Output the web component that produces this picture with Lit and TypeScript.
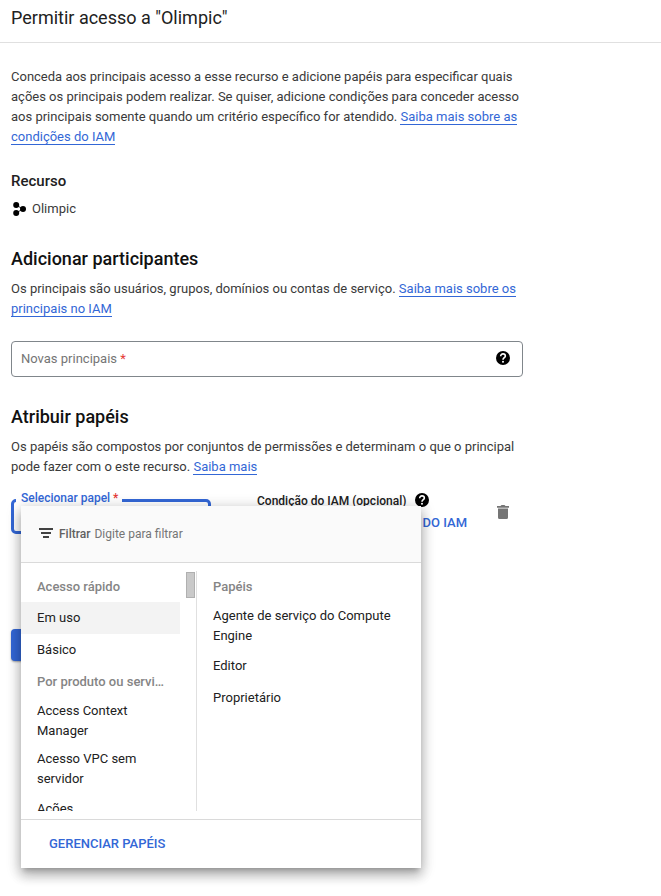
import { LitElement, html, css } from "lit";
import { customElement, property } from "lit/decorators.js";

@customElement("help-icon")
class HelpIcon extends LitElement {
  static styles = css`
    :host { display: block; width: 14px; height: 14px; }
    svg { display: block; }
  `;
  render() {
    return html`<svg width="14" height="14" viewBox="0 0 14 14">
      <circle cx="7" cy="7" r="7"/>
      <path d="M4.700 5.300C4.700 3.700 5.700 2.900 7 2.900s2.350.85 2.350 2.100C9.350 6.600 7 6.800 7 8.800" fill="none" stroke="#fff" stroke-width="1.600"/>
      <rect x="6.100" y="9.900" width="1.800" height="1.700" fill="#fff"/>
    </svg>`;
  }
}

type Entry = { text: string; kind?: "head" | "active" | "two" | "cut" };

@customElement("role-list")
class RoleList extends LitElement {
  @property({ attribute: false }) entries: Entry[] = [];
  static styles = css`
    :host { display: block; }
    .item { box-sizing: border-box; height: 32px; padding: 6px 16px; line-height: 20px; color: #212121; white-space: pre-line; }
    .head { height: 31px; color: #858585; font-weight: 500; white-space: nowrap; }
    .active { background: #f3f3f3; }
    .two { height: 48px; padding-top: 4px; padding-bottom: 4px; }
    .cut { padding-top: 6px; }
  `;
  render() {
    return this.entries.map((e) => html`<div class="item ${e.kind ?? ""}">${e.text}</div>`);
  }
}

@customElement("role-menu")
class RoleMenu extends LitElement {
  static styles = css`
    :host { display: flex; flex-direction: column; box-sizing: border-box; width: 400px; height: 362px; background: #fff;
      box-shadow: 0 5px 5px -3px rgba(0,0,0,.2), 0 8px 10px 1px rgba(0,0,0,.14), 0 3px 14px 2px rgba(0,0,0,.12), 0 4px 14px rgba(0,0,0,.12); }
    .filter { box-sizing: border-box; height: 57px; display: flex; align-items: center; padding: 0 18px; background: #fafafa; border-bottom: 1px solid #dadada; font-size: 12px; color: #757575; }
    .filter svg { display: block; margin: -2px 6px 0 0; }
    .filter b { font-weight: 500; color: #616161; margin-right: 4px; }
    .cols { display: flex; height: 248px; overflow: hidden; }
    .left { position: relative; width: 175px; height: 240px; margin-top: 8px; overflow: hidden; border-right: 1px solid #e0e0e0; }
    .left role-list { width: 159px; }
    .thumb { position: absolute; right: 1px; top: 1px; box-sizing: border-box; width: 9px; height: 26px; background: #c9c9c9; border: 1px solid #b0b0b0; }
    .right { width: 224px; padding-top: 8px; }
    .foot { flex: 1; border-top: 1px solid #dadada; margin-top: 8px; display: flex; align-items: center; padding-left: 28px; color: #3367d6; font-weight: 500; }
  `;
  private quick: Entry[] = [
    { text: "Acesso rápido", kind: "head" },
    { text: "Em uso", kind: "active" },
    { text: "Básico" },
    { text: "Por produto ou servi…", kind: "head" },
    { text: "Access Context\nManager", kind: "two" },
    { text: "Acesso VPC sem\nservidor", kind: "two" },
    { text: "Ações", kind: "cut" },
  ];
  private roles: Entry[] = [
    { text: "Papéis", kind: "head" },
    { text: "Agente de serviço do Compute\nEngine", kind: "two" },
    { text: "Editor" },
    { text: "Proprietário" },
  ];
  render() {
    return html`
      <div class="filter">
        <svg width="14" height="10" viewBox="0 0 14 10" fill="#424242"><path d="M0 0h14v2H0zM2 4h10v2H2zM4 8h6v2H4z"/></svg>
        <b>Filtrar</b><span>Digite para filtrar</span>
      </div>
      <div class="cols">
        <div class="left"><role-list .entries=${this.quick}></role-list><div class="thumb"></div></div>
        <div class="right"><role-list .entries=${this.roles}></role-list></div>
      </div>
      <div class="foot">GERENCIAR PAPÉIS</div>`;
  }
}

@customElement("app-root")
class AppRoot extends LitElement {
  static styles = css`
    :host { display: block; width: 661px; height: 896px; overflow: hidden; background: #fff; font: 400 13px/20px Roboto, sans-serif; color: #3a3a3a; }
    .title { box-sizing: border-box; height: 43px; padding: 6px 11px 0; border-bottom: 1px solid #e0e0e0; font-size: 18px; line-height: 24px; color: #212121; }
    .body { padding: 24px 11px 0; width: 512px; }
    p { margin: 0; white-space: nowrap; }
    .link { color: #3367d6; border-bottom: 1px solid #3367d6; }
    h3 { margin: 24px 0 0; font-size: 15px; line-height: 20px; font-weight: 500; color: #212121; }
    h2 { margin: 28px 0 0; font-size: 18px; line-height: 24px; font-weight: 500; color: #111; }
    h2 + p { margin-top: 8px; }
    .resource { display: flex; align-items: center; margin-top: 8px; }
    .resource svg { display: block; margin: 0 6px 0 2px; }
    .input { box-sizing: border-box; height: 36px; margin-top: 22px; display: flex; align-items: center; justify-content: space-between; padding: 0 12px 0 9px; border: 1px solid #80868b; border-radius: 4px; color: #757575; }
    .input help-icon { margin-top: -2px; }
    .star { color: #e53935; }
    .row { position: relative; display: flex; height: 170px; margin-top: 22px; }
    .select { box-sizing: border-box; width: 200px; height: 35px; border: 3px solid #3367d6; border-radius: 5px; }
    .label { position: absolute; left: 5px; top: -9px; padding: 0 4px 0 5px; background: #fff; font-size: 12px; line-height: 16px; font-weight: 500; color: #3367d6; }
    .cond { margin-left: 46px; width: 231px; margin-top: -9px; }
    .condhead { display: flex; align-items: center; height: 20px; font-size: 12px; font-weight: 500; color: #212121; white-space: nowrap; }
    .condhead span { padding-top: 2px; }
    .condhead help-icon { margin-left: 9px; }
    .add { width: 210px; margin-top: 1px; text-align: right; color: #3367d6; font-weight: 500; line-height: 24px; white-space: nowrap; }
    .trash { display: block; margin: 6px 0 0 9px; }
    .save { position: absolute; left: 0; top: 130px; width: 80px; height: 32px; background: #3367d6; border-radius: 4px; box-shadow: 0 1px 2px rgba(0,0,0,.35); }
    role-menu { position: absolute; left: 10px; top: 7px; }
  `;
  render() {
    return html`
      <div class="title">Permitir acesso a "Olimpic"</div>
      <div class="body">
        <p>Conceda aos principais acesso a esse recurso e adicione papéis para especificar quais<br>ações os principais podem realizar. Se quiser, adicione condições para conceder acesso<br>aos principais somente quando um critério específico for atendido. <span class="link">Saiba mais sobre as<br>condições do IAM</span></p>
        <h3>Recurso</h3>
        <div class="resource">
          <svg width="13" height="14" viewBox="0 0 13 14"><path d="M3 3l7 4-7 4" fill="none" stroke="#000" stroke-width=".8"/><circle cx="3.200" cy="3" r="3"/><circle cx="10" cy="7" r="3"/><circle cx="3.200" cy="11" r="3"/></svg>
          Olimpic
        </div>
        <h2>Adicionar participantes</h2>
        <p>Os principais são usuários, grupos, domínios ou contas de serviço. <span class="link">Saiba mais sobre os<br>principais no IAM</span></p>
        <div class="input"><span>Novas principais <span class="star">*</span></span><help-icon></help-icon></div>
        <h2>Atribuir papéis</h2>
        <p>Os papéis são compostos por conjuntos de permissões e determinam o que o principal<br>pode fazer com o este recurso. <span class="link">Saiba mais</span></p>
        <div class="row">
          <div class="select"></div>
          <div class="label">Selecionar papel <span class="star">*</span></div>
          <div class="cond">
            <div class="condhead"><span>Condição do IAM (opcional)</span><help-icon></help-icon></div>
            <div class="add">ADICIONAR CONDIÇÃO DO IAM</div>
          </div>
          <svg class="trash" width="12" height="14" viewBox="0 0 12 14" fill="#757575"><path d="M0 1h3.500l1-1h3l1 1H12v1.700H0zM1 3.500h10v9q0 1.500-1.500 1.500h-7Q1 14 1 12.500z"/></svg>
          <div class="save"></div>
          <role-menu></role-menu>
        </div>
      </div>`;
  }
}
